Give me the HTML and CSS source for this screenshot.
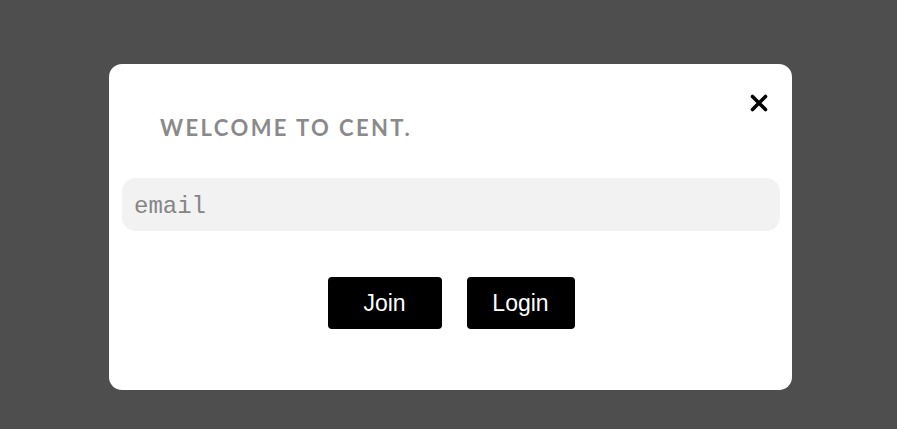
FILE: index.html
```html
<!DOCTYPE html>
<html>
<head>
<meta charset="utf-8">
<link rel="stylesheet" href="styles.css">
</head>
<body>
<div class="modal">
  <button class="close" aria-label="Close">
    <svg width="18" height="18" viewBox="0 0 18 18"><path d="M2.5 2.5L15.5 15.5M15.5 2.5L2.5 15.5" stroke="#000" stroke-width="3.6" stroke-linecap="round"/></svg>
  </button>
  <h2 class="title">WELCOME TO CENT.</h2>
  <div class="field">email</div>
  <div class="actions">
    <button class="btn btn-join">Join</button>
    <button class="btn btn-login">Login</button>
  </div>
</div>
</body>
</html>
```
FILE: styles.css
```css
html, body {
  margin: 0;
  height: 100%;
}
body {
  background: #4e4e4e;
  padding-top: 64px;
  box-sizing: border-box;
}
.modal {
  position: relative;
  box-sizing: border-box;
  margin-left: 109px;
  width: 683px;
  height: 326px;
  background: #fff;
  border-radius: 13px;
  padding: 52px 12px 0 13px;
}
.close {
  position: absolute;
  top: 30px;
  left: 641px;
  width: 18px;
  height: 18px;
  padding: 0;
  border: 0;
  background: none;
  display: flex;
}
.title {
  margin: 0 0 0 38px;
  font-family: "Lato", sans-serif;
  font-weight: 700;
  font-size: 22px;
  line-height: 24px;
  letter-spacing: 2.4px;
  color: #8a8a8a;
}
.field {
  margin-top: 38px;
  height: 53px;
  box-sizing: border-box;
  padding: 4px 0 0 12px;
  background: #f2f2f2;
  border-radius: 14px;
  display: flex;
  align-items: center;
  font-family: "Liberation Mono", monospace;
  font-size: 24px;
  color: #858585;
}
.actions {
  margin-top: 46px;
  display: flex;
  justify-content: center;
  gap: 25px;
}
.btn {
  height: 52px;
  border: 0;
  border-radius: 4px;
  background: #000;
  color: #fff;
  font-family: "Liberation Sans", Arial, sans-serif;
  font-size: 23px;
  padding: 0;
}
.btn-join { width: 114px; }
.btn-login { width: 108px; }
```
